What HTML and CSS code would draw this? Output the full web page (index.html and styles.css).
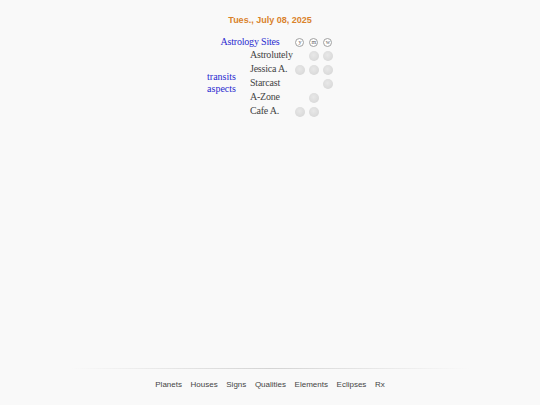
FILE: index.html
```html
<!DOCTYPE html>
<html>
<head>
<meta charset="utf-8">
<link rel="stylesheet" href="styles.css">
</head>
<body>
<div class="page">
  <div class="date">Tues., July 08, 2025</div>
  <table class="sites">
    <tr class="head">
      <td colspan="2" class="title"><a href="#">Astrology Sites</a></td>
      <td class="c"><span class="hc">y</span></td>
      <td class="c"><span class="hc">m</span></td>
      <td class="c"><span class="hc">w</span></td>
    </tr>
    <tr>
      <td rowspan="5" class="label"><a href="#">transits<br>aspects</a></td>
      <td class="name">Astrolutely</td>
      <td class="c"></td>
      <td class="c"><span class="dot"></span></td>
      <td class="c"><span class="dot"></span></td>
    </tr>
    <tr>
      <td class="name">Jessica A.</td>
      <td class="c"><span class="dot"></span></td>
      <td class="c"><span class="dot"></span></td>
      <td class="c"><span class="dot"></span></td>
    </tr>
    <tr>
      <td class="name">Starcast</td>
      <td class="c"></td>
      <td class="c"></td>
      <td class="c"><span class="dot"></span></td>
    </tr>
    <tr>
      <td class="name">A-Zone</td>
      <td class="c"></td>
      <td class="c"><span class="dot"></span></td>
      <td class="c"></td>
    </tr>
    <tr>
      <td class="name">Cafe A.</td>
      <td class="c"><span class="dot"></span></td>
      <td class="c"><span class="dot"></span></td>
      <td class="c"></td>
    </tr>
  </table>
  <div class="footer">
    <div class="rule"></div>
    <nav class="links">
      <a href="#">Planets</a>
      <a href="#">Houses</a>
      <a href="#">Signs</a>
      <a href="#">Qualities</a>
      <a href="#">Elements</a>
      <a href="#">Eclipses</a>
      <a href="#">Rx</a>
    </nav>
  </div>
</div>
</body>
</html>
```
FILE: styles.css
```css
html, body {
  margin: 0;
  padding: 0;
  background: #f9f9f9;
}
.page {
  min-height: 405px;
  display: flex;
  flex-direction: column;
  align-items: center;
}
.date {
  margin-top: 14px;
  font-family: "Liberation Sans", Arial, sans-serif;
  font-weight: bold;
  font-size: 9px;
  line-height: 12px;
  color: #d9822b;
}
.sites {
  margin-top: 9px;
  margin-left: 2px;
  border-collapse: collapse;
  font-family: "Liberation Serif", "Times New Roman", serif;
  font-size: 10px;
  color: #444;
}
.sites td {
  padding: 0;
  height: 14px;
  line-height: 14px;
}
.sites a {
  color: #2a2ad0;
  text-decoration: none;
}
.title {
  text-align: center;
  letter-spacing: -0.2px;
}
.head td {
  height: 13px;
  line-height: 13px;
}
.label {
  line-height: 12px !important;
  padding-right: 14px !important;
  vertical-align: middle;
}
.name {
  width: 43px;
  white-space: nowrap;
  letter-spacing: -0.2px;
}
.c {
  width: 14px;
  text-align: center;
  vertical-align: middle;
}
.hc {
  display: inline-block;
  box-sizing: border-box;
  width: 9px;
  height: 9px;
  border: 1px solid #a0a0a0;
  border-radius: 50%;
  background: #fff;
  font-size: 6px;
  line-height: 6px;
  color: #666;
  text-align: center;
  vertical-align: middle;
}
.dot {
  display: inline-block;
  width: 10px;
  height: 10px;
  border-radius: 50%;
  background: radial-gradient(circle at 45% 40%, #e8e8e8 0%, #dcdcdc 60%, #cecece 100%);
  vertical-align: middle;
}
.footer {
  margin-top: auto;
  width: 100%;
  display: flex;
  flex-direction: column;
  align-items: center;
  padding-bottom: 15px;
}
.rule {
  width: 400px;
  height: 1px;
  background: linear-gradient(to right, rgba(210,210,210,0), #d4d4d4 50%, rgba(210,210,210,0));
  margin-bottom: 11px;
}
.links {
  display: flex;
  gap: 8.6px;
  font-family: "Liberation Sans", Arial, sans-serif;
  font-size: 8px;
  line-height: 10px;
}
.links a {
  color: #444;
  text-decoration: none;
}
```
